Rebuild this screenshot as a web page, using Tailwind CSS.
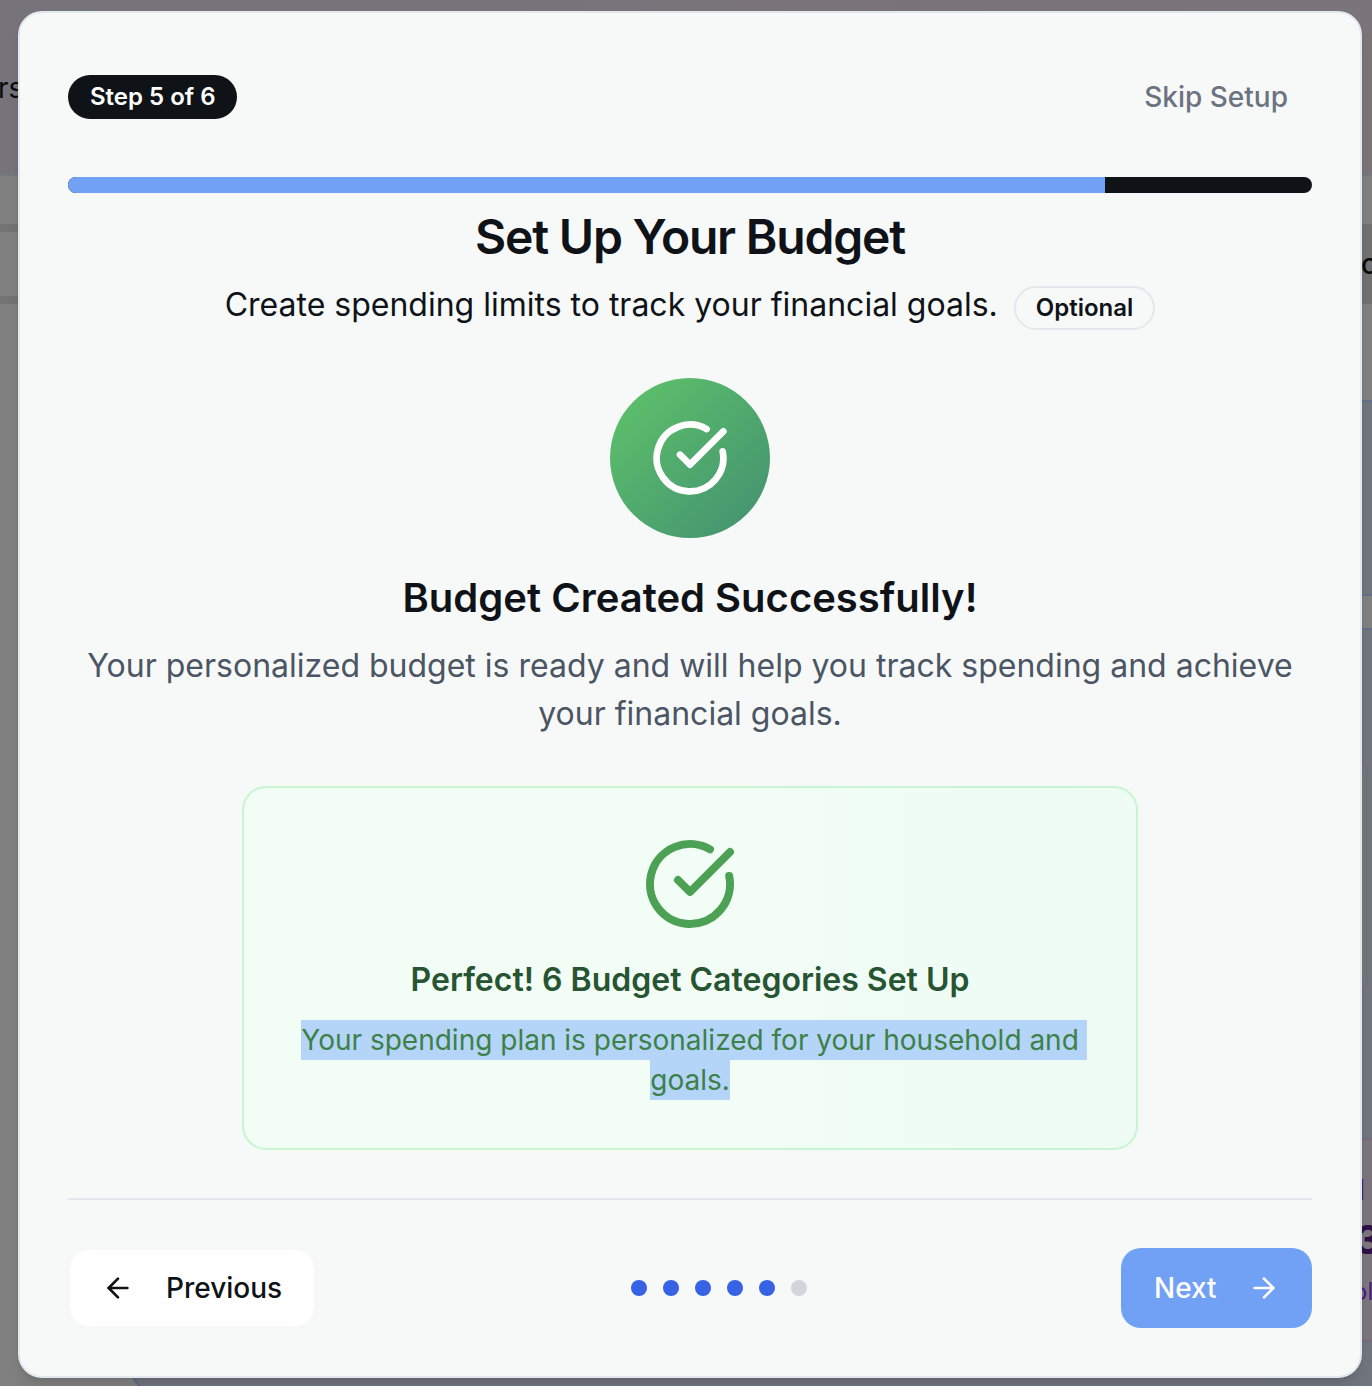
<!DOCTYPE html>
<html lang="en">
<head>
<meta charset="utf-8">
<title>Set Up Your Budget</title>
<script src="https://cdn.jsdelivr.net/npm/@tailwindcss/browser@4"></script>
</head>
<body class="relative h-[1386px] w-[1372px] overflow-hidden bg-[#808080] font-[Inter,sans-serif] text-[#0f1318] antialiased">
  <!-- Dimmed dashboard behind the dialog -->
  <div class="absolute top-[1300px] left-[130px] h-[92px] w-[1260px] rounded-bl-3xl border-b-2 border-l-2 border-[#5f6a80] bg-[#70747c]" aria-hidden="true"></div>
  <div class="absolute inset-0 flex flex-col overflow-hidden" aria-hidden="true">
    <div class="flex h-[176px] shrink-0 items-center border-b-2 border-[#73797d] bg-linear-to-r from-[#77737b] to-[#7b7479] pt-0.5">
      <span class="-ml-[2px] text-[28px] leading-10 text-[#0a0b0d]">rs</span>
    </div>
    <div class="flex min-h-0 flex-1 justify-between">
      <div class="flex w-[100px] flex-col">
        <div class="h-12"></div>
        <div class="h-20 border-y-8 border-[#737373]"></div>
      </div>
      <div class="flex w-[100px] flex-col">
        <div class="h-12"></div>
        <div class="flex h-20 items-center bg-[#717171] pl-[89px] text-[28px] font-medium text-[#0a0b0d]">c</div>
        <div class="h-24"></div>
        <div class="h-[196px] border-y-2 border-[#62708a] bg-[#70757e]"></div>
        <div class="h-8"></div>
        <div class="flex flex-1 flex-col border-t-2 border-[#62708a] bg-[#70757e] pt-[120px]">
          <div class="h-[252px] w-[95px] rounded-r-3xl border-r border-[#6c7075] bg-[#76787b]"></div>
          <div class="mt-[136px] flex h-[204px] flex-col border-y-2 border-[#756b7c] bg-[#7b767e] pt-[30px] text-[#4b1a80]">
            <span class="pl-[86px] text-[28px] leading-10 font-medium">l</span>
            <span class="pl-[83px] text-[40px] leading-[60px] font-bold text-[#2d1147]">3</span>
            <span class="pl-[81px] text-[24px] leading-[44px]">ol</span>
          </div>
        </div>
      </div>
    </div>
  </div>

  <!-- Setup dialog -->
  <main class="absolute top-[11px] left-[18px] flex h-[1367px] w-[1344px] flex-col rounded-3xl border-2 border-[#e2e8ee] bg-[#f7f9f9] px-12 pt-12 shadow-lg">
    <header class="flex h-[72px] items-center justify-between">
      <span class="flex h-11 w-[169px] items-center rounded-full bg-[#0f1318] pl-[22px] text-2xl font-semibold whitespace-nowrap text-white">Step 5 of 6</span>
      <button class="px-6 text-[28px] leading-10 font-medium text-[#6b7280]">Skip Setup</button>
    </header>
    <div class="mt-11 h-4 shrink-0 overflow-hidden rounded-full bg-[#0f1318]">
      <div class="h-full bg-[#71a1f5]" style="width:83.333%"></div>
    </div>
    <h1 class="mt-5 text-center text-5xl leading-[48px] font-semibold tracking-tight">Set Up Your Budget</h1>
    <div class="mt-5 flex h-12 items-center justify-center gap-4">
      <span class="text-[32px] leading-[48px]">Create spending limits to track your financial goals.</span>
      <span class="mt-[6px] flex h-11 items-center rounded-full border-2 border-[#e2e8ee] px-5 text-2xl font-semibold">Optional</span>
    </div>
    <div class="mt-[49px] flex size-40 shrink-0 items-center justify-center self-center rounded-full bg-linear-to-br from-[#60c469] to-[#42906f]">
      <svg class="size-20 text-white" viewBox="0 0 24 24" fill="none" stroke="currentColor" stroke-width="2" stroke-linecap="round" stroke-linejoin="round"><path d="M21.801 10A10 10 0 1 1 17 3.335"/><path d="m9 11 3 3L22 4"/></svg>
    </div>
    <h2 class="mt-8 text-center text-[40px] leading-[56px] font-semibold">Budget Created Successfully!</h2>
    <p class="mt-4 text-center text-[32px] leading-[48px] text-[#4b5563]">Your personalized budget is ready and will help you track spending and achieve your financial goals.</p>
    <section class="mt-12 flex h-[364px] w-[896px] flex-col items-center self-center rounded-3xl border-2 border-[#c8f5d2] bg-linear-to-r from-[#f2fdf5] from-40% to-[#eefcf5] px-12 pt-12">
      <svg class="size-24 text-[#4ca154]" viewBox="0 0 24 24" fill="none" stroke="currentColor" stroke-width="2" stroke-linecap="round" stroke-linejoin="round"><path d="M21.801 10A10 10 0 1 1 17 3.335"/><path d="m9 11 3 3L22 4"/></svg>
      <h3 class="mt-6 text-[32px] leading-[48px] font-semibold text-[#275432]">Perfect! 6 Budget Categories Set Up</h3>
      <div class="mt-4 flex flex-col items-center text-[28px] leading-10 whitespace-pre text-[#3d8148]"><span class="ml-2 bg-[#b4d4f8]">Your spending plan is personalized for your household and </span><span class="bg-[#b4d4f8]">goals.</span></div>
    </section>
    <footer class="mt-12 flex items-start justify-between border-t-2 border-[#e2e8ee] pt-12">
      <button class="mt-0.5 ml-0.5 flex h-[76px] w-[244px] items-center rounded-[20px] bg-white pl-8 text-[28px] font-medium"><svg class="mr-8 size-8" viewBox="0 0 24 24" fill="none" stroke="currentColor" stroke-width="2" stroke-linecap="round" stroke-linejoin="round"><path d="m12 19-7-7 7-7"/><path d="M19 12H5"/></svg>Previous</button>
      <div class="ml-0.5 flex h-20 items-center gap-4">
        <i class="size-4 rounded-full bg-[#3662e3]"></i>
        <i class="size-4 rounded-full bg-[#3662e3]"></i>
        <i class="size-4 rounded-full bg-[#3662e3]"></i>
        <i class="size-4 rounded-full bg-[#3662e3]"></i>
        <i class="size-4 rounded-full bg-[#3662e3]"></i>
        <i class="size-4 rounded-full bg-[#d2d5dc]"></i>
      </div>
      <button class="flex h-20 w-[191px] items-center justify-between rounded-[20px] bg-[#71a1f5] pr-8 pl-[33px] text-[28px] font-medium text-white">Next<svg class="size-8" viewBox="0 0 24 24" fill="none" stroke="currentColor" stroke-width="2" stroke-linecap="round" stroke-linejoin="round"><path d="M5 12h14"/><path d="m12 5 7 7-7 7"/></svg></button>
    </footer>
  </main>
</body>
</html>
